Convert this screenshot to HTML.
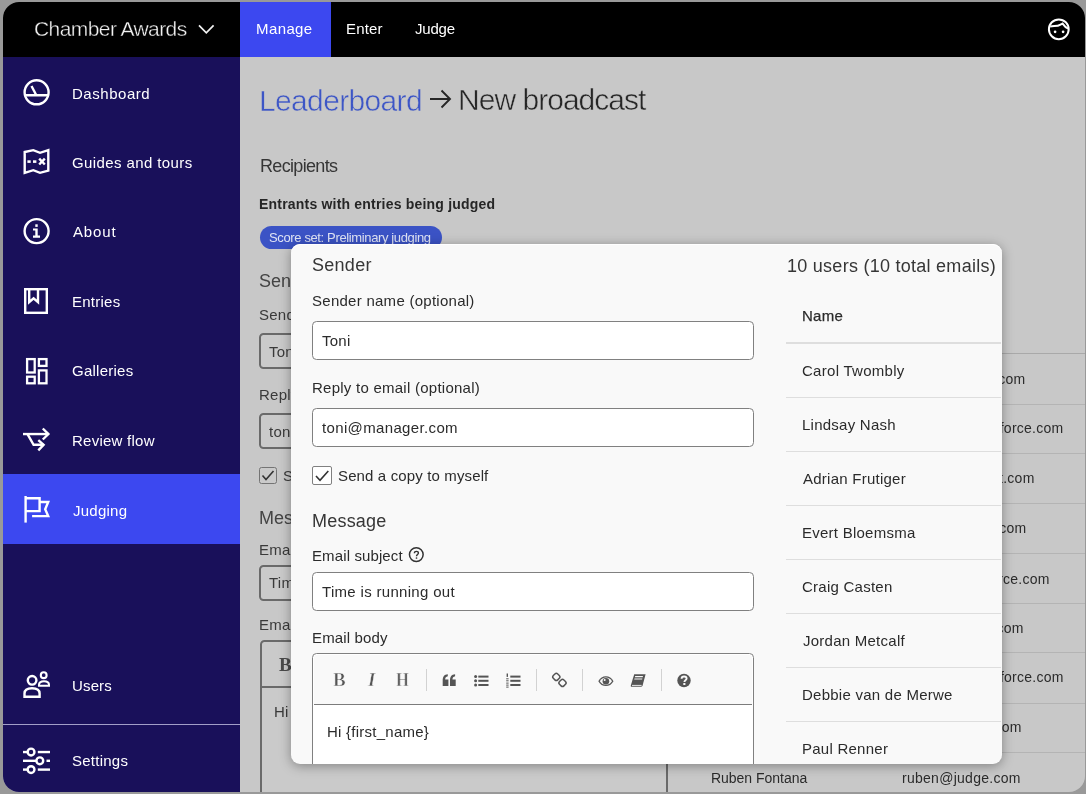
<!DOCTYPE html>
<html><head><meta charset="utf-8"><style>
html,body{margin:0;padding:0}
body{width:1086px;height:797px;position:relative;overflow:hidden;background:#fff;font-family:"Liberation Sans",sans-serif}
.frame{position:absolute;left:0;top:0;width:1086px;height:794px;background:#999}
.app{position:absolute;left:3px;top:2px;width:1082px;height:790px;border-radius:16px;overflow:hidden;background:#c8c8c8}
.abs{position:absolute}
.clip{position:absolute;left:0;top:0;width:1086px;height:797px;clip-path:inset(2px 1px 5px 3px round 16px)}
.t{position:absolute;white-space:pre;line-height:1;font-family:"Liberation Sans",sans-serif;will-change:transform}
.ic{position:absolute;width:40px;height:40px;z-index:3}
.ic svg{display:block}
.inp{position:absolute;background:#fff;border:1.7px solid #808080;border-radius:4.5px;box-sizing:border-box}
.binp{position:absolute;background:#cacaca;border:2px solid #6a6a6a;border-radius:4.5px;box-sizing:border-box}
</style></head><body>
<div class="frame"></div>
<div class="app">
  <div class="abs" style="left:0;top:0;width:1082px;height:55px;background:#000"></div>
  <div class="abs" style="left:237px;top:0;width:91px;height:55px;background:#3c48f0"></div>
  <div class="abs" style="left:0;top:55px;width:237px;height:735px;background:#19105a"></div>
  <div class="abs" style="left:0;top:472px;width:237px;height:70px;background:#3c48f0"></div>
  <div class="abs" style="left:0;top:722.3px;width:237px;height:1.2px;background:#a29ec8"></div>
</div>
<svg class="abs" style="left:196px;top:22px;z-index:3" width="22" height="14" viewBox="0 0 22 14"><path d="M3 3.4 L10.3 10.8 L17.6 3.4" fill="none" stroke="#f2f2f2" stroke-width="1.7"/></svg>
<svg class="abs" style="left:1039px;top:9px;z-index:3" width="40" height="40" viewBox="0 0 40 40"><g fill="none" stroke="#fff" stroke-width="2"><circle cx="19.8" cy="20.3" r="9.9"/><path d="M11.2 17.6 C14.5 16.8 18.5 17.4 21 15.8 L23.6 14.6 C25 16.6 26.6 18.6 29.2 19.6"/></g><g fill="#fff"><circle cx="16.1" cy="22.8" r="1.35"/><circle cx="24.1" cy="22.8" r="1.35"/></g></svg>
<div class="clip">
<div class='ic' style='left:17px;top:72px'><svg width='40' height='40' viewBox='0 0 40 40'><g fill='none' stroke='#fff' stroke-width='2.4'><circle cx='19.6' cy='20.3' r='12'/><line x1='8' y1='23.3' x2='31.4' y2='23.3'/><line x1='14.5' y1='14' x2='19.3' y2='23.3'/></g></svg></div><div class='ic' style='left:17px;top:142px'><svg width='40' height='40' viewBox='0 0 40 40'><g fill='none' stroke='#fff' stroke-width='2.4' stroke-linejoin='miter'><path d='M7.7 10 L16.3 8.2 L23 10.8 L31.3 8.2 L31.3 28.6 L23 30.8 L16.3 28.2 L7.7 30.8 Z'/></g><g fill='#fff'><rect x='10.4' y='18.3' width='3.3' height='2.6'/><rect x='16' y='18.3' width='3.4' height='2.6'/></g><g stroke='#fff' stroke-width='2.4'><line x1='22.2' y1='16.7' x2='27.8' y2='22.5'/><line x1='27.8' y1='16.7' x2='22.2' y2='22.5'/></g></svg></div><div class='ic' style='left:17px;top:211px'><svg width='40' height='40' viewBox='0 0 40 40'><g fill='none' stroke='#fff' stroke-width='2.4'><circle cx='19.6' cy='20.1' r='12'/></g><g fill='#fff'><rect x='18.3' y='13.3' width='2.4' height='2.6'/><path d='M16 17.5 H20.7 V24.6 H23 V26.8 H16 V24.6 H18.3 V19.6 H16 Z'/></g></svg></div><div class='ic' style='left:17px;top:281px'><svg width='40' height='40' viewBox='0 0 40 40'><g fill='none' stroke='#fff' stroke-width='2.4'><rect x='8.2' y='8.2' width='21.6' height='23.6'/><path d='M12.2 8.2 V21.2 L16.6 17.3 L21 21.2 V8.2'/></g></svg></div><div class='ic' style='left:17px;top:351px'><svg width='40' height='40' viewBox='0 0 40 40'><g fill='none' stroke='#fff' stroke-width='2.3'><rect x='10.1' y='8.1' width='7.6' height='13.4'/><rect x='21.9' y='8.1' width='7.6' height='6.8'/><rect x='10.1' y='25.7' width='7.6' height='6.6'/><rect x='21.9' y='19.4' width='7.6' height='12.9'/></g></svg></div><div class='ic' style='left:17px;top:420px'><svg width='40' height='40' viewBox='0 0 40 40'><g fill='none' stroke='#fff' stroke-width='2.4' stroke-linejoin='miter'><path d='M6 14.05 H31'/><path d='M25.8 8.5 L31.4 14.05 L25.8 19.5'/><path d='M10.5 14.05 L16.6 24.8 H26.5'/><path d='M21.3 20.1 L26.6 24.8 L21.3 30.4'/></g></svg></div><div class='ic' style='left:17px;top:490px'><svg width='40' height='40' viewBox='0 0 40 40'><g fill='none' stroke='#fff' stroke-width='2.4' stroke-width='2.3' stroke-linejoin='miter'><path d='M8.6 6 V32.6'/><path d='M8.6 8.3 H22.6 V21.1 H8.6'/><path d='M22.6 12 H31.2 L28.2 19.2 L31.2 26.1 H15.1'/></g></svg></div><div class='ic' style='left:17px;top:665px'><svg width='40' height='40' viewBox='0 0 40 40'><g fill='none' stroke='#fff' stroke-width='2.4'><circle cx='15.1' cy='15.3' r='4.3'/><path d='M7.5 31.7 V28.5 C7.5 24.8 10.5 23.2 15 23.2 C19.5 23.2 22.6 24.8 22.6 28.5 V31.7 Z'/><circle cx='26.7' cy='10.2' r='2.9' stroke-width='2.1'/><path d='M22 20.8 V19.8 C22 17.5 24.3 16.3 27 16.3 C29.7 16.3 32 17.5 32 19.8 V20.8 Z' stroke-width='2'/></g></svg></div><div class='ic' style='left:17px;top:740px'><svg width='40' height='40' viewBox='0 0 40 40'><g fill='none' stroke='#fff' stroke-width='2.4'><path d='M6 12.05 H10'/><circle cx='14.05' cy='12.05' r='3.4'/><path d='M20.8 12.05 H33'/><path d='M6 20.8 H19.4'/><circle cx='22.8' cy='20.8' r='3.4'/><path d='M29.5 20.8 H33'/><path d='M6 29.6 H10'/><circle cx='14.05' cy='29.6' r='3.4'/><path d='M20.8 29.6 H33'/></g></svg></div>
<!-- background page -->
<div class="abs" style="left:259.5px;top:225.6px;width:182.5px;height:23.4px;border-radius:12px;background:#3b53c5;z-index:1"></div>
<div class="binp" style="left:259px;top:333px;width:80px;height:36px;z-index:1"></div>
<div class="binp" style="left:259px;top:413px;width:80px;height:36px;z-index:1"></div>
<div class="binp" style="left:259px;top:467px;width:18px;height:17px;border-radius:2.5px;border-width:1.5px;border-color:#747474;z-index:1"></div>
<svg class="abs" style="left:259px;top:467px;z-index:2" width="18" height="17" viewBox="0 0 18 17"><path d="M3.5 8.5 L7 12.5 L14.5 4" fill="none" stroke="#333" stroke-width="1.6"/></svg>
<div class="binp" style="left:259px;top:564.5px;width:80px;height:36px;z-index:1"></div>
<div class="binp" style="left:259.5px;top:640px;width:408.5px;height:200px;z-index:1"></div>
<div class="abs" style="left:260px;top:686px;width:407px;height:1.8px;background:#6a6a6a;z-index:1"></div>
<div class="t" style="left:278.5px;top:655px;font-family:'Liberation Serif';font-weight:700;font-size:19px;color:#4a4a4a;z-index:2">B</div>

<div class="abs" style="left:667px;top:352.5px;width:420px;height:1.5px;background:#a9a9a9;z-index:1"></div>
<div class="abs" style="left:667px;top:403.5px;width:420px;height:1px;background:#b4b4b4;z-index:1"></div><div class="abs" style="left:667px;top:453px;width:420px;height:1px;background:#b4b4b4;z-index:1"></div><div class="abs" style="left:667px;top:503px;width:420px;height:1px;background:#b4b4b4;z-index:1"></div><div class="abs" style="left:667px;top:553px;width:420px;height:1px;background:#b4b4b4;z-index:1"></div><div class="abs" style="left:667px;top:602.5px;width:420px;height:1px;background:#b4b4b4;z-index:1"></div><div class="abs" style="left:667px;top:652px;width:420px;height:1px;background:#b4b4b4;z-index:1"></div><div class="abs" style="left:667px;top:702.5px;width:420px;height:1px;background:#b4b4b4;z-index:1"></div><div class="abs" style="left:667px;top:752px;width:420px;height:1px;background:#b4b4b4;z-index:1"></div>
<div class='t' style='top:18.42px;font-size:21px;font-weight:400;color:#f2f2f2;letter-spacing:-0.577px;z-index:2;-webkit-text-stroke:0.35px #000;left:34.30px'>Chamber Awards</div>
<div class='t' style='top:20.70px;font-size:15px;font-weight:400;color:#ffffff;letter-spacing:0.400px;z-index:2;left:255.60px'>Manage</div>
<div class='t' style='top:21.10px;font-size:15px;font-weight:400;color:#ffffff;letter-spacing:0.150px;z-index:2;left:345.90px'>Enter</div>
<div class='t' style='top:21.10px;font-size:15px;font-weight:400;color:#ffffff;letter-spacing:-0.200px;z-index:2;left:414.60px'>Judge</div>
<div class='t' style='top:85.85px;font-size:15px;font-weight:400;color:#ffffff;letter-spacing:0.537px;z-index:2;left:71.80px'>Dashboard</div>
<div class='t' style='top:154.60px;font-size:15px;font-weight:400;color:#ffffff;letter-spacing:0.400px;z-index:2;left:71.80px'>Guides and tours</div>
<div class='t' style='top:224.30px;font-size:15px;font-weight:400;color:#ffffff;letter-spacing:0.850px;z-index:2;left:72.80px'>About</div>
<div class='t' style='top:293.70px;font-size:15px;font-weight:400;color:#ffffff;letter-spacing:0.250px;z-index:2;left:71.80px'>Entries</div>
<div class='t' style='top:363.20px;font-size:15px;font-weight:400;color:#ffffff;letter-spacing:0.250px;z-index:2;left:71.80px'>Galleries</div>
<div class='t' style='top:432.90px;font-size:15px;font-weight:400;color:#ffffff;letter-spacing:0.250px;z-index:2;left:71.80px'>Review flow</div>
<div class='t' style='top:503.10px;font-size:15px;font-weight:400;color:#ffffff;letter-spacing:0.250px;z-index:2;left:72.80px'>Judging</div>
<div class='t' style='top:678.30px;font-size:15px;font-weight:400;color:#ffffff;letter-spacing:0.150px;z-index:2;left:71.80px'>Users</div>
<div class='t' style='top:753.20px;font-size:15px;font-weight:400;color:#ffffff;letter-spacing:0.243px;z-index:2;left:71.80px'>Settings</div>
<div class='t' style='top:85.50px;font-size:30px;font-weight:400;color:#3d56c6;letter-spacing:-0.650px;z-index:2;-webkit-text-stroke:0.5px #c9c9c9;left:259.00px'>Leaderboard</div>
<div class='t' style='top:85.20px;font-size:30px;font-weight:400;color:#262626;letter-spacing:-0.975px;z-index:2;-webkit-text-stroke:0.5px #c9c9c9;left:458.20px'>New broadcast</div>
<div class='t' style='top:156.86px;font-size:18px;font-weight:400;color:#363636;letter-spacing:-0.667px;z-index:2;left:259.50px'>Recipients</div>
<div class='t' style='top:196.55px;font-size:14px;font-weight:700;color:#262626;letter-spacing:0.200px;z-index:2;left:258.60px'>Entrants with entries being judged</div>
<div class='t' style='top:231.20px;font-size:13px;font-weight:400;color:#dfe3f5;letter-spacing:-0.366px;z-index:2;left:269.30px'>Score set: Preliminary judging</div>
<div class='t' style='top:272.06px;font-size:18px;font-weight:400;color:#444444;letter-spacing:0.000px;z-index:2;left:258.70px'>Sender</div>
<div class='t' style='top:306.50px;font-size:15px;font-weight:400;color:#3a3a3a;letter-spacing:0.250px;z-index:2;left:258.70px'>Sender name (optional)</div>
<div class='t' style='top:343.80px;font-size:15px;font-weight:400;color:#3a3a3a;letter-spacing:0.250px;z-index:2;left:268.50px'>Toni</div>
<div class='t' style='top:386.60px;font-size:15px;font-weight:400;color:#3a3a3a;letter-spacing:0.250px;z-index:2;left:258.70px'>Reply to email (optional)</div>
<div class='t' style='top:423.70px;font-size:15px;font-weight:400;color:#3a3a3a;letter-spacing:0.250px;z-index:2;left:268.50px'>toni@manager.com</div>
<div class='t' style='top:467.80px;font-size:15px;font-weight:400;color:#3a3a3a;letter-spacing:0.250px;z-index:2;left:282.50px'>Send a copy to myself</div>
<div class='t' style='top:508.86px;font-size:18px;font-weight:400;color:#444444;letter-spacing:0.000px;z-index:2;left:258.70px'>Message</div>
<div class='t' style='top:542.00px;font-size:15px;font-weight:400;color:#3a3a3a;letter-spacing:0.250px;z-index:2;left:258.70px'>Email subject</div>
<div class='t' style='top:574.70px;font-size:15px;font-weight:400;color:#3a3a3a;letter-spacing:0.250px;z-index:2;left:268.50px'>Time is running out</div>
<div class='t' style='top:616.90px;font-size:15px;font-weight:400;color:#3a3a3a;letter-spacing:0.250px;z-index:2;left:258.70px'>Email body</div>
<div class='t' style='top:704.30px;font-size:15px;font-weight:400;color:#3a3a3a;letter-spacing:0.250px;z-index:2;left:273.70px'>Hi</div>
<div class='t' style='top:372.15px;font-size:14px;font-weight:400;color:#2b2b2b;letter-spacing:0.250px;z-index:2;right:60.70px'>carol@twombly.com</div>
<div class='t' style='top:421.35px;font-size:14px;font-weight:400;color:#2b2b2b;letter-spacing:0.250px;z-index:2;right:22.30px'>lindsay@salesforce.com</div>
<div class='t' style='top:471.45px;font-size:14px;font-weight:400;color:#2b2b2b;letter-spacing:0.250px;z-index:2;right:51.20px'>adrian@entrant.com</div>
<div class='t' style='top:521.45px;font-size:14px;font-weight:400;color:#2b2b2b;letter-spacing:0.250px;z-index:2;right:59.40px'>evert@entrant.com</div>
<div class='t' style='top:571.65px;font-size:14px;font-weight:400;color:#2b2b2b;letter-spacing:0.250px;z-index:2;right:36.10px'>craig@salesforce.com</div>
<div class='t' style='top:621.05px;font-size:14px;font-weight:400;color:#2b2b2b;letter-spacing:0.250px;z-index:2;right:62.40px'>jordan@judge.com</div>
<div class='t' style='top:669.85px;font-size:14px;font-weight:400;color:#2b2b2b;letter-spacing:0.250px;z-index:2;right:22.80px'>debbie@salesforce.com</div>
<div class='t' style='top:720.25px;font-size:14px;font-weight:400;color:#2b2b2b;letter-spacing:0.250px;z-index:2;right:64.20px'>paul@judge.com</div>
<div class='t' style='top:771.15px;font-size:14px;font-weight:400;color:#2b2b2b;letter-spacing:-0.025px;z-index:2;left:711.20px'>Ruben Fontana</div>
<div class='t' style='top:771.15px;font-size:14px;font-weight:400;color:#2b2b2b;letter-spacing:0.271px;z-index:2;right:65.20px'>ruben@judge.com</div>

<!-- modal -->
<div class="abs" style="left:291px;top:244px;width:710.5px;height:520px;background:#f9f9f9;border-radius:9px;z-index:10;box-shadow:0 2px 12px rgba(0,0,0,0.35), inset 0 1px 0 #fff"></div>
<div class="inp" style="left:312px;top:320.5px;width:442px;height:39px;z-index:11"></div>
<div class="inp" style="left:312px;top:407.5px;width:442px;height:39px;z-index:11"></div>
<div class="inp" style="left:312px;top:465.5px;width:19.5px;height:19.5px;border-radius:2px;z-index:11"></div>
<svg class="abs" style="left:312px;top:465.5px;z-index:12" width="20" height="20" viewBox="0 0 20 20"><path d="M4 10 L8 14.2 L16.3 5" fill="none" stroke="#333" stroke-width="1.6"/></svg>
<svg class="abs" style="left:408px;top:546px;z-index:12" width="17" height="19" viewBox="0 0 17 19"><circle cx="8.3" cy="8.6" r="6.85" fill="none" stroke="#333" stroke-width="1.5"/><path d="M6.4 7.3 C6.4 6 7.2 5.4 8.4 5.4 C9.6 5.4 10.4 6.1 10.4 7.1 C10.4 8.5 8.5 8.6 8.5 10.3" fill="none" stroke="#333" stroke-width="1.4"/><circle cx="8.5" cy="12" r="0.85" fill="#333"/></svg>
<div class="inp" style="left:312px;top:571.5px;width:442px;height:39px;z-index:11"></div>
<div class="inp" style="left:312px;top:653px;width:442px;height:200px;z-index:11;clip-path:inset(0 0 89px 0);border-width:1.6px"></div>
<div class="abs" style="left:314px;top:703.5px;width:438px;height:1.8px;background:#7c7c7c;z-index:12"></div>
<div class="abs" style="left:314px;top:655px;width:438px;height:48.5px;background:#f9f9f9;z-index:11;border-radius:3px 3px 0 0"></div>
<div class="abs" style="left:314px;top:705.3px;width:438px;height:59px;background:#fff;z-index:11"></div>
<div class="abs" style="left:786px;top:342.2px;width:215px;height:1.5px;background:#dedede;z-index:11"></div><div class="abs" style="left:786px;top:396.5px;width:215px;height:1.5px;background:#dedede;z-index:11"></div><div class="abs" style="left:786px;top:450.5px;width:215px;height:1.5px;background:#dedede;z-index:11"></div><div class="abs" style="left:786px;top:504.5px;width:215px;height:1.5px;background:#dedede;z-index:11"></div><div class="abs" style="left:786px;top:558.5px;width:215px;height:1.5px;background:#dedede;z-index:11"></div><div class="abs" style="left:786px;top:612.5px;width:215px;height:1.5px;background:#dedede;z-index:11"></div><div class="abs" style="left:786px;top:666.5px;width:215px;height:1.5px;background:#dedede;z-index:11"></div><div class="abs" style="left:786px;top:720.5px;width:215px;height:1.5px;background:#dedede;z-index:11"></div>
<div class='t' style='top:255.96px;font-size:18px;font-weight:400;color:#363636;letter-spacing:0.280px;z-index:12;left:311.50px'>Sender</div>
<div class='t' style='top:256.76px;font-size:18px;font-weight:400;color:#363636;letter-spacing:0.264px;z-index:12;left:786.70px'>10 users (10 total emails)</div>
<div class='t' style='top:292.90px;font-size:15px;font-weight:400;color:#2b2b2b;letter-spacing:0.267px;z-index:12;left:311.50px'>Sender name (optional)</div>
<div class='t' style='top:333.40px;font-size:15px;font-weight:400;color:#2b2b2b;letter-spacing:0.250px;z-index:12;left:321.90px'>Toni</div>
<div class='t' style='top:380.30px;font-size:15px;font-weight:400;color:#2b2b2b;letter-spacing:0.250px;z-index:12;left:312.20px'>Reply to email (optional)</div>
<div class='t' style='top:420.30px;font-size:15px;font-weight:400;color:#2b2b2b;letter-spacing:0.353px;z-index:12;left:321.90px'>toni@manager.com</div>
<div class='t' style='top:467.70px;font-size:15px;font-weight:400;color:#2b2b2b;letter-spacing:0.135px;z-index:12;left:337.80px'>Send a copy to myself</div>
<div class='t' style='top:512.26px;font-size:18px;font-weight:400;color:#363636;letter-spacing:0.217px;z-index:12;left:312.00px'>Message</div>
<div class='t' style='top:548.10px;font-size:15px;font-weight:400;color:#2b2b2b;letter-spacing:0.117px;z-index:12;left:312.00px'>Email subject</div>
<div class='t' style='top:583.70px;font-size:15px;font-weight:400;color:#2b2b2b;letter-spacing:0.311px;z-index:12;left:322.00px'>Time is running out</div>
<div class='t' style='top:630.30px;font-size:15px;font-weight:400;color:#2b2b2b;letter-spacing:0.144px;z-index:12;left:312.00px'>Email body</div>
<div class='t' style='top:724.30px;font-size:15px;font-weight:400;color:#2b2b2b;letter-spacing:0.250px;z-index:12;left:327.00px'>Hi {first_name}</div>
<div class='t' style='top:307.60px;font-size:15px;font-weight:400;color:#2b2b2b;letter-spacing:0.267px;z-index:12;-webkit-text-stroke:0.25px #2b2b2b;left:801.80px'>Name</div>
<div class='t' style='top:362.90px;font-size:15px;font-weight:400;color:#2b2b2b;letter-spacing:0.283px;z-index:12;left:801.60px'>Carol Twombly</div>
<div class='t' style='top:416.90px;font-size:15px;font-weight:400;color:#2b2b2b;letter-spacing:0.250px;z-index:12;left:801.60px'>Lindsay Nash</div>
<div class='t' style='top:470.90px;font-size:15px;font-weight:400;color:#2b2b2b;letter-spacing:0.250px;z-index:12;left:802.60px'>Adrian Frutiger</div>
<div class='t' style='top:524.90px;font-size:15px;font-weight:400;color:#2b2b2b;letter-spacing:0.250px;z-index:12;left:801.60px'>Evert Bloemsma</div>
<div class='t' style='top:578.90px;font-size:15px;font-weight:400;color:#2b2b2b;letter-spacing:0.250px;z-index:12;left:801.60px'>Craig Casten</div>
<div class='t' style='top:632.90px;font-size:15px;font-weight:400;color:#2b2b2b;letter-spacing:0.250px;z-index:12;left:802.60px'>Jordan Metcalf</div>
<div class='t' style='top:686.90px;font-size:15px;font-weight:400;color:#2b2b2b;letter-spacing:0.250px;z-index:12;left:801.60px'>Debbie van de Merwe</div>
<div class='t' style='top:740.90px;font-size:15px;font-weight:400;color:#2b2b2b;letter-spacing:0.250px;z-index:12;left:801.60px'>Paul Renner</div>


<svg class="abs" style="left:428px;top:88px;z-index:2" width="26" height="22" viewBox="0 0 26 22"><g fill="none" stroke="#262626" stroke-width="1.9"><path d="M2 11 H21.5"/><path d="M13.5 2.5 L22 11 L13.5 19.5"/></g></svg>
<div class="t" style="left:332.5px;top:670px;font-family:'Liberation Serif';font-weight:700;font-size:19px;color:#555;z-index:13;-webkit-text-stroke:0.5px #f9f9f9">B</div>
<div class="t" style="left:367.5px;top:670px;font-family:'Liberation Serif';font-style:italic;font-weight:700;font-size:19px;color:#555;z-index:13;-webkit-text-stroke:0.4px #f9f9f9">I</div>
<div class="t" style="left:395.5px;top:671px;font-family:'Liberation Serif';font-weight:700;font-size:18px;color:#555;z-index:13;transform:scaleX(0.92);transform-origin:0 0;-webkit-text-stroke:0.5px #f9f9f9">H</div>
<div class="abs" style="left:425.5px;top:669px;width:1px;height:22px;background:#d2d2d2;z-index:13"></div>
<div class="abs" style="left:535.5px;top:669px;width:1px;height:22px;background:#d2d2d2;z-index:13"></div>
<div class="abs" style="left:581.5px;top:669px;width:1px;height:22px;background:#d2d2d2;z-index:13"></div>
<div class="abs" style="left:660.5px;top:669px;width:1px;height:22px;background:#d2d2d2;z-index:13"></div>
<svg class="abs" style="left:440px;top:672px;z-index:13" width="20" height="16" viewBox="0 0 20 16"><g fill="#555"><path d="M2.7 8.5 C2.7 4.5 4.2 2.6 7.8 2.2 V4.2 C6 4.5 5.2 5.6 5.2 7.6 H8.4 V14 H2.7 Z"/><path d="M10 8.5 C10 4.5 11.5 2.6 15.1 2.2 V4.2 C13.3 4.5 12.5 5.6 12.5 7.6 H15.7 V14 H10 Z"/></g></svg>
<svg class="abs" style="left:472px;top:672px;z-index:13" width="20" height="16" viewBox="0 0 20 16"><g fill="#555"><circle cx="3.6" cy="4.6" r="1.5"/><circle cx="3.6" cy="8.8" r="1.5"/><circle cx="3.6" cy="13" r="1.5"/><rect x="6.3" y="3.6" width="10.2" height="2"/><rect x="6.3" y="7.8" width="10.2" height="2"/><rect x="6.3" y="12" width="10.2" height="2"/></g></svg>
<svg class="abs" style="left:504px;top:672px;z-index:13" width="20" height="17" viewBox="0 0 20 17"><g fill="#555"><rect x="2.6" y="1.5" width="1.4" height="3.4"/><rect x="2.2" y="6.3" width="2.4" height="1"/><rect x="2.2" y="8.3" width="2.4" height="1"/><rect x="2.2" y="10.6" width="2.4" height="1"/><rect x="2.2" y="12.6" width="2.4" height="1"/><rect x="2.2" y="14.6" width="2.4" height="1"/><rect x="6.3" y="3.6" width="10.2" height="2"/><rect x="6.3" y="7.8" width="10.2" height="2"/><rect x="6.3" y="12" width="10.2" height="2"/></g></svg>
<svg class="abs" style="left:550px;top:671px;z-index:13" width="20" height="18" viewBox="0 0 20 18"><g fill="none" stroke="#555" stroke-width="1.45"><rect x="-3.1" y="-3.1" width="6.2" height="6.2" rx="2" transform="translate(6.3,5.9) rotate(45)"/><rect x="-3.1" y="-3.1" width="6.2" height="6.2" rx="2" transform="translate(12.5,11.9) rotate(45)"/></g></svg>
<svg class="abs" style="left:597px;top:674px;z-index:13" width="18" height="14" viewBox="0 0 18 14"><path d="M1.3 7.2 C3 4 5.8 2.3 8.9 2.3 C12 2.3 14.8 4 16.5 7.2 C14.8 10.4 12 12.1 8.9 12.1 C5.8 12.1 3 10.4 1.3 7.2 Z" fill="#555"/><path d="M2.8 7.2 C4.3 4.9 6.4 3.6 8.9 3.6 C11.4 3.6 13.5 4.9 15 7.2 C13.5 9.5 11.4 10.8 8.9 10.8 C6.4 10.8 4.3 9.5 2.8 7.2 Z" fill="#f9f9f9"/><circle cx="8.9" cy="7.2" r="3.3" fill="#555"/><circle cx="7.7" cy="6.1" r="1" fill="#f9f9f9"/></svg>
<svg class="abs" style="left:629px;top:672px;z-index:13" width="18" height="17" viewBox="0 0 18 17"><path d="M5.2 2.3 H16.6 L13.6 13.6 C13.4 14.3 12.9 14.8 12.2 14.8 H2.6 C1.9 14.8 1.6 14.2 1.8 13.5 Z" fill="#555"/><path d="M6.2 4 H14 L13.7 5.2 H5.9 Z M5.5 6.4 H13.4 L13.1 7.6 H5.2 Z" fill="#f9f9f9"/><path d="M3 13.4 H12.6" stroke="#f9f9f9" stroke-width="0.9"/></svg>
<svg class="abs" style="left:676px;top:673px;z-index:13" width="16" height="16" viewBox="0 0 16 16"><circle cx="8" cy="7.5" r="6.7" fill="#555"/><path d="M5.6 5.8 C5.6 4.3 6.6 3.5 8.1 3.5 C9.6 3.5 10.6 4.4 10.6 5.6 C10.6 7.3 8.4 7.3 8.4 8.9" fill="none" stroke="#f9f9f9" stroke-width="1.9"/><rect x="7.3" y="10" width="2.1" height="2" fill="#f9f9f9"/></svg>

</div>
</body></html>
